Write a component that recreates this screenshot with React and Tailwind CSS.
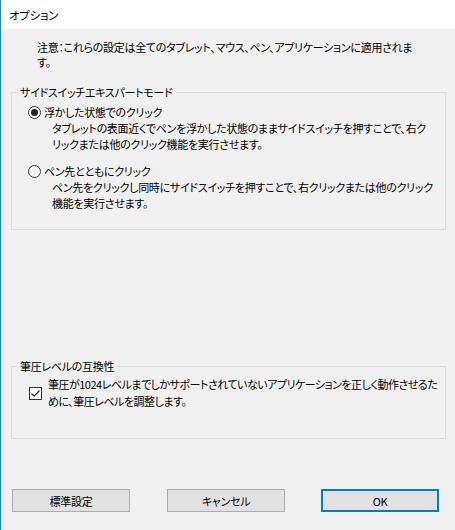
export default function App() {
  const font = {
    fontFamily: '"Noto Sans CJK JP", "Noto Sans", sans-serif',
  };

  return (
    <div
      className="w-[455px] h-[530px] bg-[#f0f0f0] border-l border-[#1e84d8] text-[11px] leading-[16px] tracking-[-0.3px] text-black [font-feature-settings:'palt'] overflow-hidden"
      style={font}
    >
      {/* Title bar */}
      <div className="h-[29px] bg-white pl-[8px] flex items-center text-[11.5px]">
        <span>オプション</span>
      </div>

      {/* Note */}
      <div className="mt-[11px] pl-[36px] leading-[15px] whitespace-nowrap">
        注意：これらの設定は全てのタブレット、マウス、ペン、アプリケーションに適用されま
        <br />
        す。
      </div>

      {/* Side switch expert mode */}
      <fieldset className="mt-[14px] ml-[10px] w-[435px] border border-[#dcdcdc] pl-[6px] pb-[18px]">
        <legend className="px-[2px] leading-[16px]">サイドスイッチエキスパートモード</legend>

        <div className="mt-[4px] ml-[10px]">
          <div className="flex items-center h-[16px]">
            <span className="w-[13px] h-[13px] rounded-full border border-[#333] bg-white flex items-center justify-center">
              <span className="w-[7px] h-[7px] rounded-full bg-[#222]" />
            </span>
            <span className="ml-[3px]">浮かした状態でのクリック</span>
          </div>
          <div className="pl-[24px] whitespace-nowrap">
            タブレットの表面近くでペンを浮かした状態のままサイドスイッチを押すことで、右ク
            <br />
            リックまたは他のクリック機能を実行させます。
          </div>

          <div className="mt-[11px] flex items-center h-[16px]">
            <span className="w-[13px] h-[13px] rounded-full border border-[#333] bg-white" />
            <span className="ml-[3px]">ペン先とともにクリック</span>
          </div>
          <div className="pl-[24px] whitespace-nowrap">
            ペン先をクリックし同時にサイドスイッチを押すことで、右クリックまたは他のクリック
            <br />
            機能を実行させます。
          </div>
        </div>
      </fieldset>

      {/* Pressure level compatibility */}
      <fieldset className="mt-[128px] ml-[10px] w-[435px] border border-[#dcdcdc] pl-[6px] pb-[28px]">
        <legend className="px-[2px] leading-[16px]">筆圧レベルの互換性</legend>

        <div className="mt-[2px] ml-[11px] flex items-center">
          <span className="w-[13px] h-[13px] border border-[#333] bg-white flex items-center justify-center shrink-0">
            <svg width="11" height="11" viewBox="0 0 11 11">
              <path d="M1.5 5.5 L4.2 8.2 L9.5 2.5" fill="none" stroke="#222" strokeWidth="1.2" />
            </svg>
          </span>
          <div className="ml-[6px] whitespace-nowrap tracking-[-0.5px] leading-[17px]">
            筆圧が1024レベルまでしかサポートされていないアプリケーションを正しく動作させるた
            <br />
            めに、筆圧レベルを調整します。
          </div>
        </div>
      </fieldset>

      {/* Buttons */}
      <div className="mt-[50px] ml-[11px] flex">
        <button className="w-[118px] h-[23px] bg-[#e1e1e1] border border-[#adadad] flex items-center justify-center">
          標準設定
        </button>
        <button className="ml-[37px] w-[118px] h-[23px] bg-[#e1e1e1] border border-[#adadad] flex items-center justify-center">
          キャンセル
        </button>
        <button className="ml-[36px] w-[118px] h-[23px] bg-[#e1e1e1] border-2 border-[#0078d7] flex items-center justify-center">
          OK
        </button>
      </div>
    </div>
  );
}
